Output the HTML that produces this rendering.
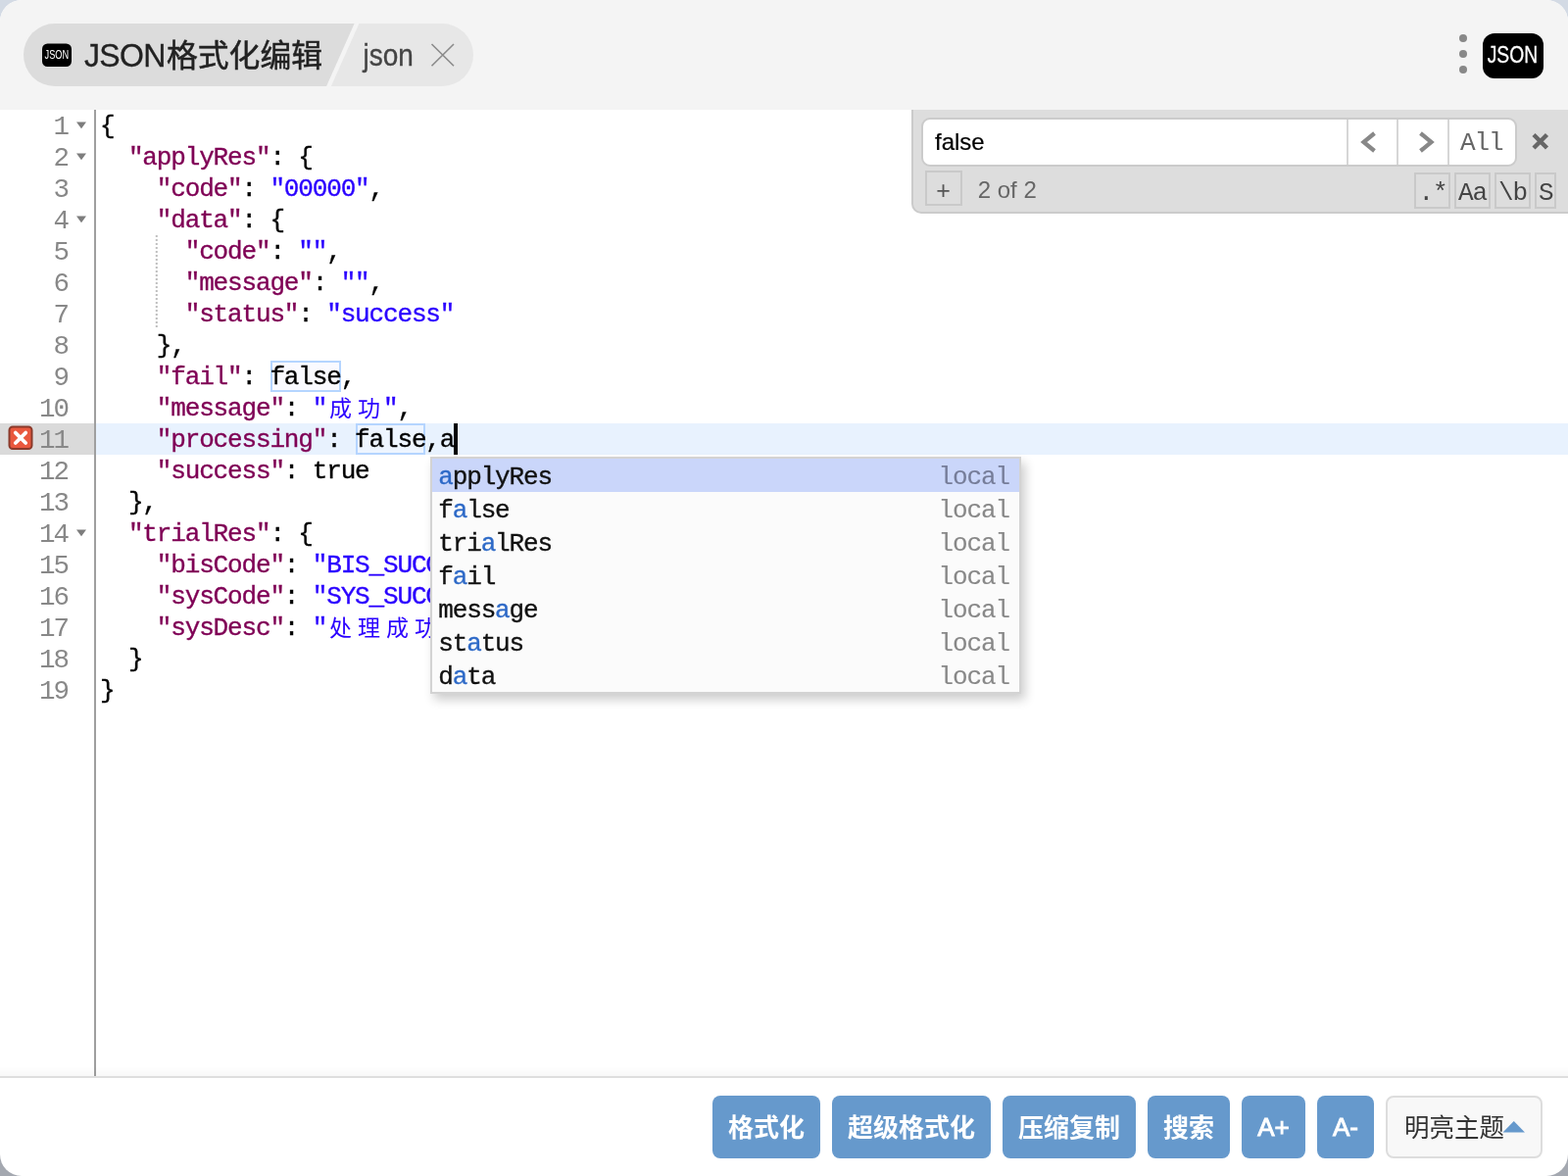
<!DOCTYPE html>
<html><head><meta charset="utf-8"><title>JSON</title>
<style>
html,body{margin:0;padding:0}
body{width:1600px;height:1200px;overflow:hidden;background:linear-gradient(to bottom,#d3dae4 0,#d3dae4 60px,#a4a8b0 1140px,#a4a8b0 100%);position:relative;font-family:"Liberation Sans",sans-serif}
.abs{position:absolute}
#win{will-change:transform;position:absolute;left:0;top:0;width:1600px;height:1200px;border-radius:22px;background:#fff;overflow:hidden}
#hdr{position:absolute;left:0;top:0;width:1600px;height:112px;background:#f4f4f4}
.mono,.ln,.gn,.row,.mb{font-family:"Liberation Mono",monospace;font-size:26px;letter-spacing:-1.1535px;white-space:pre}
.ln,.row{-webkit-text-stroke:0.35px}
.ln{position:absolute;left:102.0px;height:32px;line-height:32px;color:#000}
.k{color:#7f0055} .s{color:#2a00ff} .p{color:#000}
.gn{position:absolute;left:0;width:68.946px;text-align:right;height:32px;line-height:32px;color:#888;font-size:27.5px;letter-spacing:-2.0537px}
#popup{position:absolute;left:439px;top:466px;width:599px;height:238px;border:2px solid #d3d3d3;background:#fbfbfb;box-shadow:4px 6px 10px rgba(0,0,0,.2);overflow:hidden}
.row{position:absolute;left:0;width:599px;height:34px;line-height:34px;color:#111}
.row.sel{background:#cad6fa}
.row .pt{position:absolute;left:6.3px;top:1.6px}
.row b{font-weight:normal;color:#2d69c7}
.row .meta{position:absolute;right:10.154px;top:1.6px;color:#888;-webkit-text-stroke:0.1px}
.row.sel .meta{color:#767d99}
#search{position:absolute;left:930px;top:112px;width:700px;height:104px;background:#ddd;border:2px solid #cbcbcb;border-top:none;border-radius:0 0 0 10px;box-sizing:content-box}
.sf{position:absolute;left:940px;top:120px;width:604px;height:46px;background:#fff;border:2px solid #cbcbcb;border-radius:9px}
.vsep{position:absolute;top:122px;width:2px;height:46px;background:#d6d6d6}
.mb{position:absolute;top:175.5px;height:33px;line-height:38px;border:2px solid #c9c9c9;color:#444;text-align:center;box-sizing:content-box}
.btn{position:absolute;top:1118px;height:64px;background:#6699cc;border-radius:8px}
.btxt{position:absolute;top:1118px;height:64px;line-height:64px;color:#fff;font-weight:normal;-webkit-text-stroke:0.9px #fff;font-size:26px}
</style></head><body>
<div id="win">
<div id="hdr">
<svg class="abs" style="left:0;top:0" width="1600" height="112">
<path d="M56 24H361.6L333.1 88H56A32 32 0 0 1 56 24Z" fill="#dcdcdc"/>
<path d="M366.4 24H451A32 32 0 0 1 451 88H337.9Z" fill="#e7e7e7"/>
<rect x="43" y="44.5" width="30" height="23.5" rx="5.5" fill="#000"/>
<text x="57.9" y="59.8" font-family="Liberation Sans" font-size="12.4" fill="#fff" text-anchor="middle" textLength="24.6" lengthAdjust="spacingAndGlyphs">JSON</text>
<text x="170" y="67.8" font-family="'Liberation Sans','Noto Sans CJK SC',sans-serif" font-size="32" fill="#222" stroke="#222" stroke-width="0.5" textLength="159" lengthAdjust="spacingAndGlyphs">格式化编辑</text>
<path d="M440.5 45L463 67.2M463 45L440.5 67.2" stroke="#8a8a8a" stroke-width="1.6" fill="none"/>
<circle cx="1493" cy="39" r="4" fill="#888"/><circle cx="1493" cy="55" r="4" fill="#888"/><circle cx="1493" cy="71" r="4" fill="#888"/>
<rect x="1513" y="34" width="62" height="46" rx="12" fill="#000"/>
<text x="1543.4" y="63.8" font-family="Liberation Sans" font-size="23.2" fill="#fff" stroke="#fff" stroke-width="0.3" text-anchor="middle" textLength="51.4" lengthAdjust="spacingAndGlyphs">JSON</text>
</svg>
<div class="abs" style="left:86px;top:37.4px;height:40px;line-height:40px;font-size:32px;color:#222;transform:scaleY(1.04);transform-origin:0 30px;-webkit-text-stroke:0.3px #222;letter-spacing:-0.7px">JSON</div>
<div class="abs" style="left:370.5px;top:37.8px;height:40px;line-height:40px;font-size:28px;color:#444;transform:scaleY(1.1);transform-origin:0 29px;-webkit-text-stroke:0.3px #444">json</div>
</div>

<!-- editor -->
<div class="abs" style="left:0;top:432px;width:96px;height:32px;background:#dadada"></div>
<div class="abs" style="left:98px;top:432px;width:1502px;height:32px;background:#e8f2fe"></div>
<div class="abs" style="left:96px;top:112px;width:2px;height:986px;background:#9f9f9f"></div>
<div class="abs" style="left:276.19px;top:368px;width:67.45px;height:28px;border:2px solid #b5d5ff;background:#fafaff"></div>
<div class="abs" style="left:362.88px;top:432px;width:67.45px;height:28px;border:2px solid #b5d5ff;background:#eef5ff"></div>
<svg class="abs" style="left:158px;top:240px" width="4" height="96"><line x1="1.8" y1="0" x2="1.8" y2="96" stroke="#bfbfbf" stroke-width="2" stroke-dasharray="2 2"/></svg>
<div class="gn" style="top:114.0px">1</div>
<svg class="abs" style="left:76px;top:123px" width="14" height="10"><path d="M2 1.6 H12 L7 8.2 Z" fill="#7d7d7d"/></svg>
<div class="gn" style="top:146.0px">2</div>
<svg class="abs" style="left:76px;top:155px" width="14" height="10"><path d="M2 1.6 H12 L7 8.2 Z" fill="#7d7d7d"/></svg>
<div class="gn" style="top:178.0px">3</div>
<div class="gn" style="top:210.0px">4</div>
<svg class="abs" style="left:76px;top:219px" width="14" height="10"><path d="M2 1.6 H12 L7 8.2 Z" fill="#7d7d7d"/></svg>
<div class="gn" style="top:242.0px">5</div>
<div class="gn" style="top:274.0px">6</div>
<div class="gn" style="top:306.0px">7</div>
<div class="gn" style="top:338.0px">8</div>
<div class="gn" style="top:370.0px">9</div>
<div class="gn" style="top:402.0px">10</div>
<div class="gn" style="top:434.0px">11</div>
<div class="gn" style="top:466.0px">12</div>
<div class="gn" style="top:498.0px">13</div>
<div class="gn" style="top:530.0px">14</div>
<svg class="abs" style="left:76px;top:539px" width="14" height="10"><path d="M2 1.6 H12 L7 8.2 Z" fill="#7d7d7d"/></svg>
<div class="gn" style="top:562.0px">15</div>
<div class="gn" style="top:594.0px">16</div>
<div class="gn" style="top:626.0px">17</div>
<div class="gn" style="top:658.0px">18</div>
<div class="gn" style="top:690.0px">19</div>
<svg class="abs" style="left:8px;top:434px" width="27" height="27"><rect x="1.5" y="1.5" width="23" height="22.5" rx="3.5" fill="#e9583e" stroke="#8a3a2b" stroke-width="2"/><path d="M7.8 7.6L18.2 18M18.2 7.6L7.8 18" stroke="#fff" stroke-width="3.8" stroke-linecap="round"/></svg>
<div class="ln" style="top:113.0px"><span class="p">{</span></div>
<div class="ln" style="top:145.0px"><span class="p">  </span><span class="k">"applyRes"</span><span class="p">: {</span></div>
<div class="ln" style="top:177.0px"><span class="p">    </span><span class="k">"code"</span><span class="p">: </span><span class="s">"00000"</span><span class="p">,</span></div>
<div class="ln" style="top:209.0px"><span class="p">    </span><span class="k">"data"</span><span class="p">: {</span></div>
<div class="ln" style="top:241.0px"><span class="p">      </span><span class="k">"code"</span><span class="p">: </span><span class="s">""</span><span class="p">,</span></div>
<div class="ln" style="top:273.0px"><span class="p">      </span><span class="k">"message"</span><span class="p">: </span><span class="s">""</span><span class="p">,</span></div>
<div class="ln" style="top:305.0px"><span class="p">      </span><span class="k">"status"</span><span class="p">: </span><span class="s">"success"</span></div>
<div class="ln" style="top:337.0px"><span class="p">    },</span></div>
<div class="ln" style="top:369.0px"><span class="p">    </span><span class="k">"fail"</span><span class="p">: false,</span></div>
<div class="ln" style="top:401.0px"><span class="p">    </span><span class="k">"message"</span><span class="p">: </span><span class="s">"</span><span class="p">    </span><span class="s">"</span><span class="p">,</span></div>
<div class="ln" style="top:433.0px"><span class="p">    </span><span class="k">"processing"</span><span class="p">: false,a</span></div>
<div class="ln" style="top:465.0px"><span class="p">    </span><span class="k">"success"</span><span class="p">: true</span></div>
<div class="ln" style="top:497.0px"><span class="p">  },</span></div>
<div class="ln" style="top:529.0px"><span class="p">  </span><span class="k">"trialRes"</span><span class="p">: {</span></div>
<div class="ln" style="top:561.0px"><span class="p">    </span><span class="k">"bisCode"</span><span class="p">: </span><span class="s">"BIS_SUCCESS"</span><span class="p">,</span></div>
<div class="ln" style="top:593.0px"><span class="p">    </span><span class="k">"sysCode"</span><span class="p">: </span><span class="s">"SYS_SUCCESS"</span><span class="p">,</span></div>
<div class="ln" style="top:625.0px"><span class="p">    </span><span class="k">"sysDesc"</span><span class="p">: </span><span class="s">"</span><span class="p">        </span><span class="s">"</span></div>
<div class="ln" style="top:657.0px"><span class="p">  }</span></div>
<div class="ln" style="top:689.0px"><span class="p">}</span></div>
<svg class="abs" style="left:0;top:0" width="1600" height="1200"><text font-family="'Liberation Mono','Noto Sans CJK SC',monospace" font-size="23" fill="#2a00ff" x="336 365" y="425">成功</text><text font-family="'Liberation Mono','Noto Sans CJK SC',monospace" font-size="23" fill="#2a00ff" x="336 365 394 423" y="649">处理成功</text></svg>
<div class="abs" style="left:463px;top:432px;width:4px;height:32px;background:#000"></div>

<div id="popup">
<div class="row sel" style="top:0px"><span class="pt"><b>a</b>pplyRes</span><span class="meta">local</span></div>
<div class="row" style="top:34px"><span class="pt">f<b>a</b>lse</span><span class="meta">local</span></div>
<div class="row" style="top:68px"><span class="pt">tri<b>a</b>lRes</span><span class="meta">local</span></div>
<div class="row" style="top:102px"><span class="pt">f<b>a</b>il</span><span class="meta">local</span></div>
<div class="row" style="top:136px"><span class="pt">mess<b>a</b>ge</span><span class="meta">local</span></div>
<div class="row" style="top:170px"><span class="pt">st<b>a</b>tus</span><span class="meta">local</span></div>
<div class="row" style="top:204px"><span class="pt">d<b>a</b>ta</span><span class="meta">local</span></div>
</div>

<!-- search box -->
<div id="search"></div>
<div class="sf"></div>
<div class="vsep" style="left:1374px"></div><div class="vsep" style="left:1425px"></div><div class="vsep" style="left:1477px"></div>
<div class="abs" style="left:954px;top:129px;height:32px;line-height:32px;font-size:24px;color:#000;-webkit-text-stroke:0.2px">false</div>
<svg class="abs" style="left:1380px;top:126px" width="220" height="40">
<path d="M22.5 10L11.5 19L22.5 28" stroke="#888" stroke-width="4.2" fill="none"/>
<path d="M69.5 10L80.5 19L69.5 28" stroke="#888" stroke-width="4.2" fill="none"/>
<path d="M185 11.5L198.5 25M198.5 11.5L185 25" stroke="#666" stroke-width="4.4" fill="none"/>
</svg>
<div class="mono abs" style="left:1490px;top:130px;height:32px;line-height:32px;color:#666">All</div>
<div class="abs" style="left:944px;top:174px;width:34px;height:32px;border:2px solid #c9c9c9;box-sizing:content-box"></div>
<div class="abs" style="left:943.6px;top:175.5px;width:38px;height:36px;line-height:36px;text-align:center;font-size:25px;color:#555">+</div>
<div class="abs" style="left:997.7px;top:176px;height:36px;line-height:36px;font-size:24px;color:#666">2 of 2</div>
<div class="mb" style="left:1443px;width:32.90px"><span style="margin-right:-1.154px">.*</span></div>
<div class="mb" style="left:1484px;width:32.90px">Aa</div>
<div class="mb" style="left:1525px;width:32.90px">\b</div>
<div class="mb" style="left:1566px;width:18.45px">S</div>

<!-- footer -->
<div class="abs" style="left:0;top:1088px;width:1600px;height:10px;background:linear-gradient(to bottom,rgba(0,0,0,0),rgba(0,0,0,.028))"></div>
<div class="abs" style="left:0;top:1098px;width:1600px;height:2px;background:#dedede"></div>
<div class="btn" style="left:727px;width:110px"></div><div class="btn" style="left:849px;width:162px"></div><div class="btn" style="left:1023px;width:136px"></div><div class="btn" style="left:1171px;width:84px"></div>
<div class="btn" style="left:1267px;width:65px"></div>
<div class="btn" style="left:1344px;width:58px"></div>
<div class="btxt" style="left:1267px;width:65px;text-align:center">A+</div>
<div class="btxt" style="left:1344px;width:58px;text-align:center">A-</div>
<div class="abs" style="left:1414px;top:1118px;width:156px;height:60px;border:2px solid #ddd;border-radius:8px;background:#f8f8f8"></div>
<svg class="abs" style="left:0;top:1100px" width="1600" height="100">
<g transform="translate(0,-1100)">
<g font-family="'Liberation Sans','Noto Sans CJK SC',sans-serif" font-size="26" font-weight="bold" fill="#fff" text-anchor="middle">
<text x="782" y="1159.5">格式化</text>
<text x="930" y="1159.5">超级格式化</text>
<text x="1091" y="1159.5">压缩复制</text>
<text x="1213" y="1159.5">搜索</text>
</g>
<text x="1433" y="1159.5" font-family="'Liberation Sans','Noto Sans CJK SC',sans-serif" font-size="26" fill="#333" textLength="102" lengthAdjust="spacingAndGlyphs">明亮主题</text>
<path d="M1533.5 1155.5L1544.75 1144L1556 1155.5Z" fill="#6699cc"/>
</g></svg>
</div>
</body></html>
